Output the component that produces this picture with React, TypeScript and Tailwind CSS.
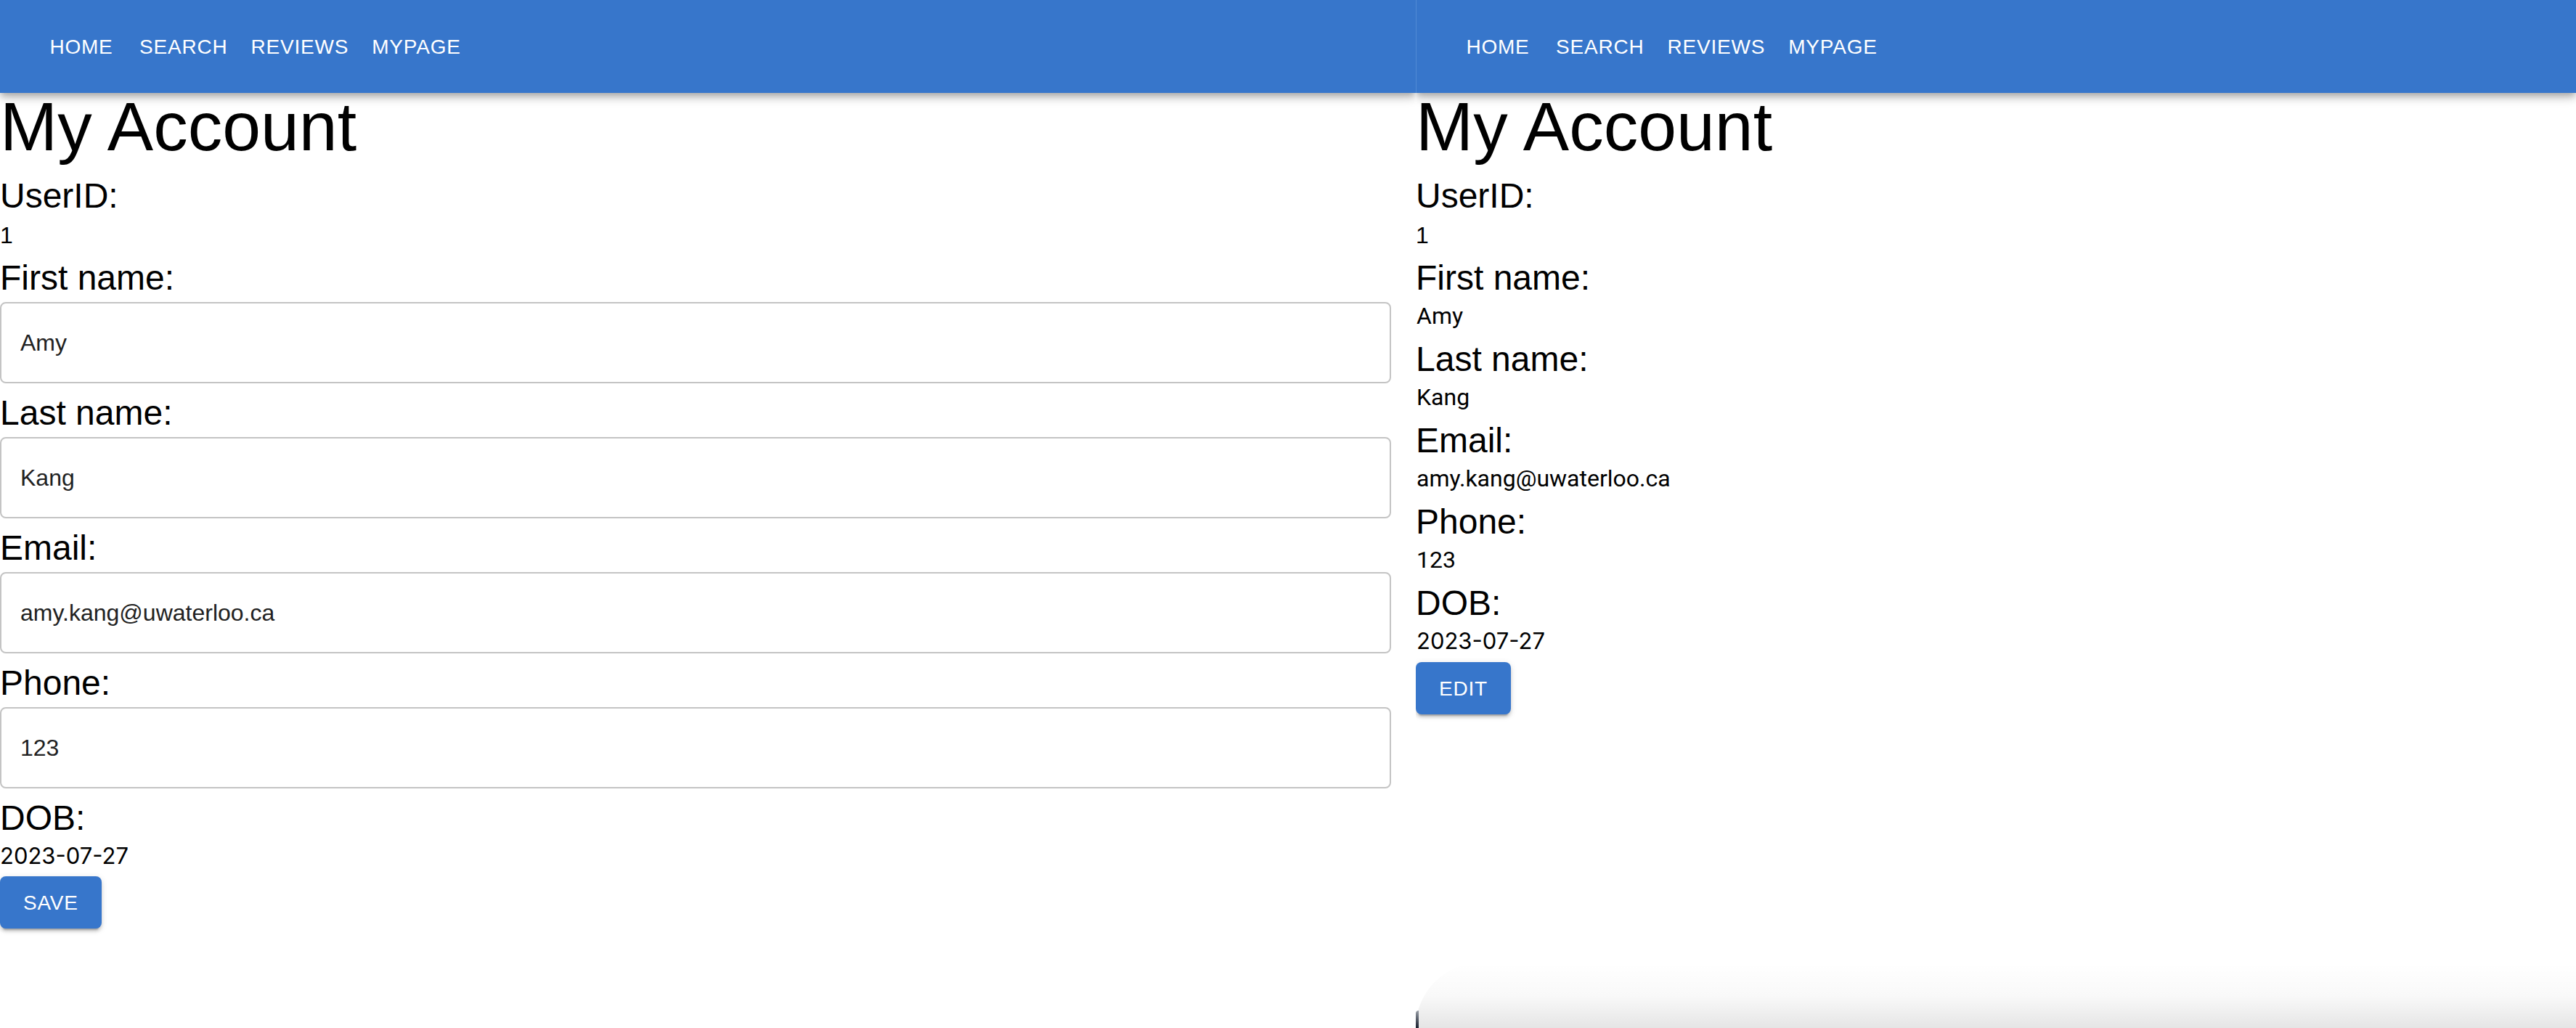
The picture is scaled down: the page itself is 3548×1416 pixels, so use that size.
import React from "react";

const NAV_ITEMS = ["HOME", "SEARCH", "REVIEWS", "MYPAGE"];

function NavBar({ divider }: { divider?: boolean }) {
  return (
    <header
      className={`relative z-10 flex h-[128px] shrink-0 items-center bg-[#3776cb] px-[48px] shadow-[0_4px_8px_-2px_rgba(0,0,0,0.2),0_8px_10px_0_rgba(0,0,0,0.14),0_2px_20px_0_rgba(0,0,0,0.12)] ${
        divider ? "border-l border-[#5089d4]" : ""
      }`}
    >
      {NAV_ITEMS.map((l) => (
        <span
          key={l}
          className="min-w-[128px] px-[16px] py-[12px] text-center font-['Liberation_Sans',Arial,sans-serif] text-[28px] leading-[49px] tracking-[0.8px] text-white"
        >
          {l}
        </span>
      ))}
    </header>
  );
}

function Heading() {
  return (
    <h1 className="font-['Liberation_Sans',Arial,sans-serif] text-[95px] leading-[93px] text-black">
      My Account
    </h1>
  );
}

function Label({ children, className = "" }: { children: React.ReactNode; className?: string }) {
  return (
    <h2 className={`font-['Liberation_Sans',Arial,sans-serif] text-[48px] leading-[56px] text-black ${className}`}>
      {children}
    </h2>
  );
}

function Field({ value }: { value: string }) {
  return (
    <input
      readOnly
      value={value}
      className="mt-[5px] box-border h-[112px] w-[1916px] rounded-[8px] border-2 border-[#c4c4c4] bg-white px-[26px] font-['Liberation_Sans',Arial,sans-serif] text-[32px] text-[#212121] outline-none"
    />
  );
}

function RobotoValue({ children, className = "" }: { children: React.ReactNode; className?: string }) {
  return (
    <p className={`font-['Roboto',sans-serif] text-[32px] leading-[48px] text-black ${className}`}>{children}</p>
  );
}

function DateValue({ className = "" }: { className?: string }) {
  return (
    <p className={`font-['Inter',sans-serif] text-[31px] leading-[48px] text-black ${className}`}>2023-07-27</p>
  );
}

function ActionButton({ label, className = "" }: { label: string; className?: string }) {
  return (
    <button
      className={`flex h-[72px] items-center rounded-[8px] bg-[#3776cb] px-[32px] font-['Liberation_Sans',Arial,sans-serif] text-[28px] leading-[49px] tracking-[0.8px] text-white shadow-[0_6px_2px_-4px_rgba(0,0,0,0.2),0_4px_4px_0_rgba(0,0,0,0.14),0_2px_10px_0_rgba(0,0,0,0.12)] ${className}`}
    >
      {label}
    </button>
  );
}

function UserIdBlock() {
  return (
    <>
      <Label className="mt-[21px]">UserID:</Label>
      <p className="mt-[2px] font-['Liberation_Sans',Arial,sans-serif] text-[32px] leading-[48px] text-black">1</p>
    </>
  );
}

export default function App() {
  return (
    <div className="flex h-[1416px] w-[3548px] overflow-hidden bg-white">
      {/* Left: edit mode */}
      <section className="flex h-full w-[1950px] shrink-0 flex-col overflow-hidden bg-white">
        <NavBar />
        <main className="flex flex-col items-start">
          <Heading />
          <UserIdBlock />
          <Label className="mt-[7px]">First name:</Label>
          <Field value="Amy" />
          <Label className="mt-[13px]">Last name:</Label>
          <Field value="Kang" />
          <Label className="mt-[13px]">Email:</Label>
          <Field value="amy.kang@uwaterloo.ca" />
          <Label className="mt-[13px]">Phone:</Label>
          <Field value="123" />
          <Label className="mt-[13px]">DOB:</Label>
          <DateValue />
          <ActionButton label="SAVE" className="mt-[4px]" />
        </main>
      </section>

      {/* Right: view mode */}
      <section className="relative flex h-full flex-1 flex-col overflow-hidden bg-white">
        <NavBar divider />
        <main className="flex flex-col items-start">
          <Heading />
          <UserIdBlock />
          <Label className="mt-[7px]">First name:</Label>
          <RobotoValue className="ml-[1px]">Amy</RobotoValue>
          <Label className="mt-[8px]">Last name:</Label>
          <RobotoValue className="ml-[1px]">Kang</RobotoValue>
          <Label className="mt-[8px]">Email:</Label>
          <RobotoValue className="ml-[1px]">amy.kang@uwaterloo.ca</RobotoValue>
          <Label className="mt-[8px]">Phone:</Label>
          <RobotoValue className="ml-[1px]">123</RobotoValue>
          <Label className="mt-[8px]">DOB:</Label>
          <DateValue className="ml-[1px]" />
          <ActionButton label="EDIT" className="mt-[5px]" />
        </main>

        {/* shadow of an overlapping window below the viewport */}
        <div className="pointer-events-none absolute bottom-0 left-0 right-0 h-[90px] rounded-tl-[90px] bg-gradient-to-b from-[rgba(0,0,0,0)] via-[rgba(0,0,0,0.025)] to-[rgba(0,0,0,0.1)]" />
        <div className="pointer-events-none absolute bottom-0 left-0 h-[24px] w-[4px] rounded-tl-[4px] bg-gradient-to-b from-[#9aa0a8] to-[#1c2230]" />
      </section>
    </div>
  );
}
